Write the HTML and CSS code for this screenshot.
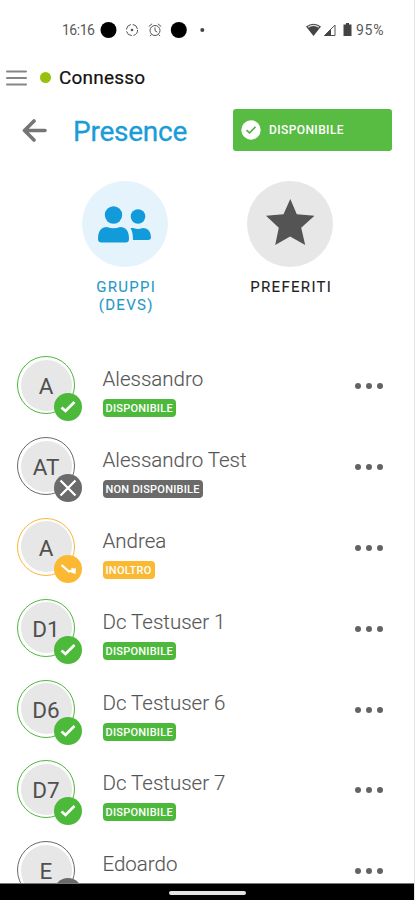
FILE: index.html
```html
<!DOCTYPE html>
<html lang="it">
<head>
<meta charset="utf-8">
<title>Presence</title>
<link rel="stylesheet" href="styles.css">
</head>
<body>
<svg width="0" height="0" class="defs">
  <symbol id="ok" viewBox="0 0 28 28"><circle cx="14" cy="14" r="14" fill="#4db93b"/><path d="M7.500 14.500l4 3.500L20.500 9" fill="none" stroke="#fff" stroke-width="2.700"/></symbol>
  <symbol id="off" viewBox="0 0 28 28"><circle cx="14" cy="14" r="14" fill="#6a6a6a"/><path d="M6.500 6.500l15 15M21.500 6.500l-15 15" stroke="#fff" stroke-width="2.300"/></symbol>
  <symbol id="fwd" viewBox="0 0 28 28"><circle cx="14" cy="14" r="14" fill="#fab833"/><path d="M7.500 10l7.500 6.500 3.500-1" fill="none" stroke="#fff" stroke-width="2.300"/><path d="M17 13l5 .5-.5 5.500-4.500-1.500 1-2z" fill="#fff"/></symbol>
</svg>
<div class="phone">
  <div class="status">
    <span class="time">16:16</span>
    <svg class="notes" width="110" height="20" viewBox="0 0 110 20">
      <circle cx="8.500" cy="10" r="8"/>
      <g fill="none" stroke="#555" stroke-width="1"><circle cx="32" cy="10" r="5.600" stroke-dasharray="7 1.800"/><circle cx="55" cy="10.500" r="5"/><path d="M48.800 6.500l3.300-2.700M61.200 6.500l-3.300-2.700M55 7.500v3.200l2.300 1.500M51.500 14.500l-1.500 1.600M58.500 14.500l1.500 1.600"/></g>
      <circle cx="32" cy="10" r="1.300" fill="#555"/>
      <circle cx="78.800" cy="10" r="8"/>
      <circle cx="102.300" cy="10" r="2" fill="#444"/>
    </svg>
    <svg class="signals" width="48" height="16" viewBox="0 0 48 16">
      <path d="M0 4.500Q7.500-1 15 4.500L7.500 14z" fill="#444"/><path d="M2 5.200Q7.500 1.500 13 5.200" fill="none" stroke="#ddd" stroke-width="1.200"/>
      <path d="M18.500 13.500L29 3v10.500z" fill="none" stroke="#555" stroke-width="1"/><path d="M18 14l7-7v7z" fill="#444"/>
      <path d="M40 1h3v1.500h2.500V14h-8V2.500H40z" fill="#444"/>
    </svg>
    <span class="charge">95%</span>
  </div>
  <div class="connection">
    <svg width="21" height="16" viewBox="0 0 21 16"><path d="M1 1.500h19M1 8h19M1 14.500h19" stroke="#858585" stroke-width="2" stroke-linecap="round"/></svg>
    <i class="dot"></i><span>Connesso</span>
  </div>
  <header>
    <svg width="25" height="24" viewBox="0 0 25 24"><path d="M23 11.500H2.500M12 2L2.500 11.500 12 21" fill="none" stroke="#757575" stroke-width="3.600" stroke-linecap="round" stroke-linejoin="round"/></svg>
    <h1>Presence</h1>
    <div class="state">
      <svg width="20" height="20" viewBox="0 0 20 20"><circle cx="10" cy="10" r="9.700" fill="#fff"/><path d="M5.500 10.200l3 2.600 6-6" fill="none" stroke="#58ad46" stroke-width="1.600"/></svg>
      <span>DISPONIBILE</span>
    </div>
  </header>
  <nav>
    <div class="tab active">
      <div class="disc"><svg width="86" height="86" viewBox="0 0 86 86" fill="#129bda"><circle cx="31.500" cy="34" r="8.700"/><circle cx="56" cy="35.500" r="7.300"/><path d="M16 58q0-12 9-12 6.500 2.400 13 0 9 0 9 12 0 3.500-3.500 3.500h-24Q16 61.500 16 58z"/><path d="M48.500 47h3q4.500 2.200 9 0 8 0 8.500 9 0 3-3 3H51q0-8-2.500-12z"/></svg></div>
      <p>GRUPPI<br>(DEVS)</p>
    </div>
    <div class="tab">
      <div class="disc"><svg width="86" height="86" viewBox="0 0 86 86"><path d="M43.300 18l6.500 15.300 17.700 1.500-13.300 12 4 17.200-15.100-8.500-14.900 8.500 3.600-17.200L19 34.800l17.500-1.500z" fill="#545454"/></svg></div>
      <p>PREFERITI</p>
    </div>
  </nav>
  <main>
    <div class="row ok"><div class="avatar"><span>A</span><svg><use href="#ok"/></svg></div><div class="info"><b>Alessandro</b><em>DISPONIBILE</em></div><div class="more"><i></i><i></i><i></i></div></div>
    <div class="row off"><div class="avatar"><span>AT</span><svg><use href="#off"/></svg></div><div class="info"><b>Alessandro Test</b><em>NON DISPONIBILE</em></div><div class="more"><i></i><i></i><i></i></div></div>
    <div class="row fwd"><div class="avatar"><span>A</span><svg><use href="#fwd"/></svg></div><div class="info"><b>Andrea</b><em>INOLTRO</em></div><div class="more"><i></i><i></i><i></i></div></div>
    <div class="row ok"><div class="avatar"><span>D1</span><svg><use href="#ok"/></svg></div><div class="info"><b>Dc Testuser 1</b><em>DISPONIBILE</em></div><div class="more"><i></i><i></i><i></i></div></div>
    <div class="row ok"><div class="avatar"><span>D6</span><svg><use href="#ok"/></svg></div><div class="info"><b>Dc Testuser 6</b><em>DISPONIBILE</em></div><div class="more"><i></i><i></i><i></i></div></div>
    <div class="row ok"><div class="avatar"><span>D7</span><svg><use href="#ok"/></svg></div><div class="info"><b>Dc Testuser 7</b><em>DISPONIBILE</em></div><div class="more"><i></i><i></i><i></i></div></div>
    <div class="row off"><div class="avatar"><span>E</span><svg><use href="#off"/></svg></div><div class="info"><b>Edoardo</b></div><div class="more"><i></i><i></i><i></i></div></div>
  </main>
  <footer><i></i></footer>
</div>
</body>
</html>
```
FILE: styles.css
```css
* { box-sizing: border-box; }
body { margin: 0; background: #fff; font-family: Roboto, sans-serif; }
.defs { display: none; }
.phone { display: flex; flex-direction: column; width: 415px; height: 900px; overflow: hidden; border-right: 1px solid #e4e4e4; }
.phone svg { display: block; flex: none; }
.status { display: flex; align-items: center; height: 59px; padding-left: 62px; flex: none; }
.time { width: 38px; font-size: 14px; letter-spacing: -0.5px; color: #5a5a5a; white-space: nowrap; }
.signals { margin-left: 96px; }
.charge { margin-left: 2px; font-size: 14px; letter-spacing: 0.7px; color: #5a5a5a; }
.connection { display: flex; align-items: center; height: 37px; padding-left: 6px; flex: none; font-size: 19px; font-weight: 400; letter-spacing: 0.2px; color: #111; -webkit-text-stroke: 0.2px #111; }
.dot { width: 11px; height: 11px; margin: 0 8px 0 13px; border-radius: 50%; background: #98c10d; }
header { display: flex; align-items: center; height: 69px; padding-left: 22px; flex: none; }
h1 { width: 160px; margin: 2px 0 0 26px; font-size: 28px; line-height: 34px; font-weight: 400; letter-spacing: -0.25px; color: #1a9cd8; -webkit-text-stroke: 0.3px #1a9cd8; }
.state { display: flex; align-items: center; gap: 8px; width: 159px; height: 42px; margin-top: -1px; padding-left: 8px; border-radius: 3px; background: #58bb42; color: #fff; font-size: 12px; font-weight: 500; letter-spacing: 0.4px; }
nav { display: flex; gap: 78px; height: 191.4px; padding: 16px 0 0 82px; flex: none; }
.tab { width: 87px; }
.disc { width: 86px; height: 86px; border-radius: 50%; background: #e7e7e7; }
.active .disc { background: #e5f4fc; }
.tab p { margin: 11px 0 0; padding-left: 1.5px; font-size: 15px; line-height: 18px; font-weight: 400; letter-spacing: 1.3px; text-align: center; color: #222; white-space: nowrap; -webkit-text-stroke: 0.1px; }
.active p { color: #2799c7; }
main { flex: 1; min-height: 0; overflow: hidden; }
.row { display: flex; height: 80.8px; padding-left: 17px; --c: #4db93b; }
.off { --c: #6a6a6a; }
.fwd { --c: #fab833; }
.avatar { position: relative; display: flex; width: 58px; height: 58px; padding: 2.5px; border: 1.5px solid var(--c); border-radius: 50%; }
.avatar span { display: flex; flex: 1; align-items: center; justify-content: center; padding-top: 2px; border-radius: 50%; background: #e7e7e7; font-size: 22.5px; line-height: 22px; color: #505050; }
.avatar svg { position: absolute; width: 28px; height: 28px; left: 35.5px; top: 36px; }
.info { width: 252px; padding: 11px 0 0 27.5px; }
.info b { display: block; font-size: 20.5px; line-height: 24px; font-weight: 300; letter-spacing: 0; color: #505050; -webkit-text-stroke: 0.15px #777; }
.info em { display: block; width: max-content; height: 18px; margin-top: 8px; padding: 0 3px; border-radius: 4px; background: var(--c); color: #fff; font-size: 11px; line-height: 19px; letter-spacing: 0.24px; font-style: normal; font-weight: 500; }
.more { display: flex; gap: 5px; padding: 27px 0 0 28px; }
.more i { width: 6px; height: 6px; border-radius: 50%; background: #636363; }
footer { display: flex; justify-content: center; height: 17px; padding-top: 7px; flex: none; border-top: 1px solid #777; background: #000; margin-right: -1px; }
footer i { width: 77px; height: 4px; border-radius: 2px; background: #e4e4e4; }
```
